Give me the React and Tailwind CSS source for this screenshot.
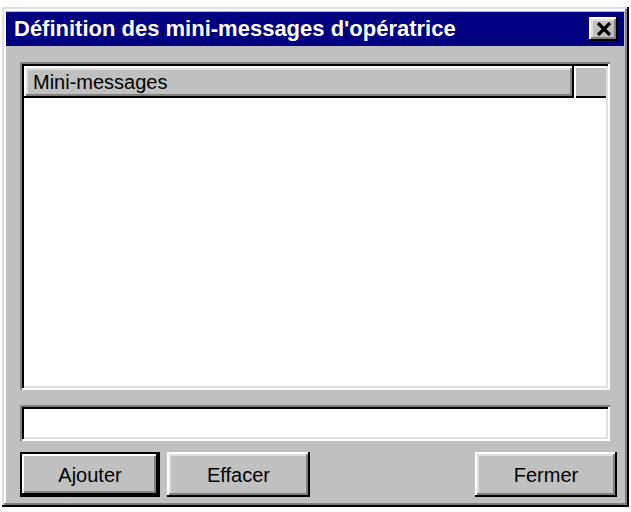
import React from "react";

const raised =
  "shadow-[inset_-2px_-2px_0_#000,inset_2px_2px_0_#fff,inset_-4px_-4px_0_#808080,inset_4px_4px_0_#dfdfdf]";
const sunken =
  "shadow-[inset_2px_2px_0_#808080,inset_-2px_-2px_0_#fff,inset_4px_4px_0_#000,inset_-4px_-4px_0_#dfdfdf]";

function Button({ children, className = "", isDefault = false }) {
  return (
    <button
      type="button"
      className={`flex h-[45px] items-center justify-center bg-[#c0c0c0] text-[20px] text-black ${
        isDefault
          ? "shadow-[inset_0_0_0_2px_#000,inset_-4px_-4px_0_#000,inset_4px_4px_0_#fff,inset_-6px_-6px_0_#808080]"
          : raised
      } ${className}`}
    >
      {children}
    </button>
  );
}

export default function App() {
  return (
    <div className="min-h-[512px] bg-white pl-[2px] pt-[7px] font-['Liberation_Sans',Arial,sans-serif]">
      <div className="flex h-[500px] w-[627px] flex-col bg-[#c0c0c0] p-[4px] pt-[5px] shadow-[inset_-2px_-2px_0_#000,inset_2px_2px_0_#dfdfdf,inset_-4px_-4px_0_#808080,inset_4px_4px_0_#fff]">
        {/* title bar */}
        <div className="flex h-[34px] w-[618px] items-center justify-between bg-[#000080] pl-[8px] pr-[6px]">
          <span className="text-[22px] font-bold leading-none text-white">
            Définition des mini-messages d'opératrice
          </span>
          <button
            type="button"
            className={`flex h-[24px] w-[29px] items-center justify-center bg-[#c0c0c0] ${raised}`}
            aria-label="Fermer"
          >
            <svg width="16" height="14" viewBox="0 0 16 14">
              <path d="M2 1 L14 13 M14 1 L2 13" stroke="#000" strokeWidth="3.2" />
            </svg>
          </button>
        </div>

        <div className="flex flex-1 flex-col pl-[14px] pt-[16px]">
          {/* list view */}
          <div className={`flex h-[328px] w-[590px] flex-col bg-white p-[4px] ${sunken}`}>
            <div className="flex h-[32px] shrink-0">
              <div className={`flex w-[550px] items-center bg-[#c0c0c0] pl-[9px] text-[20px] text-black ${raised}`}>
                Mini-messages
              </div>
              <div className="flex-1 bg-[#c0c0c0] shadow-[inset_2px_2px_0_#fff,inset_0_-2px_0_#000]" />
            </div>
            <div className="flex-1 bg-white" />
          </div>

          {/* input */}
          <div className={`mt-[15px] h-[36px] w-[590px] bg-white ${sunken}`} />

          {/* buttons */}
          <div className="mt-[11px] flex">
            <Button isDefault className="w-[140px]">
              Ajouter
            </Button>
            <Button className="ml-[7px] w-[143px]">Effacer</Button>
            <Button className="ml-auto mr-[8px] w-[142px]">Fermer</Button>
          </div>
        </div>
      </div>
    </div>
  );
}
